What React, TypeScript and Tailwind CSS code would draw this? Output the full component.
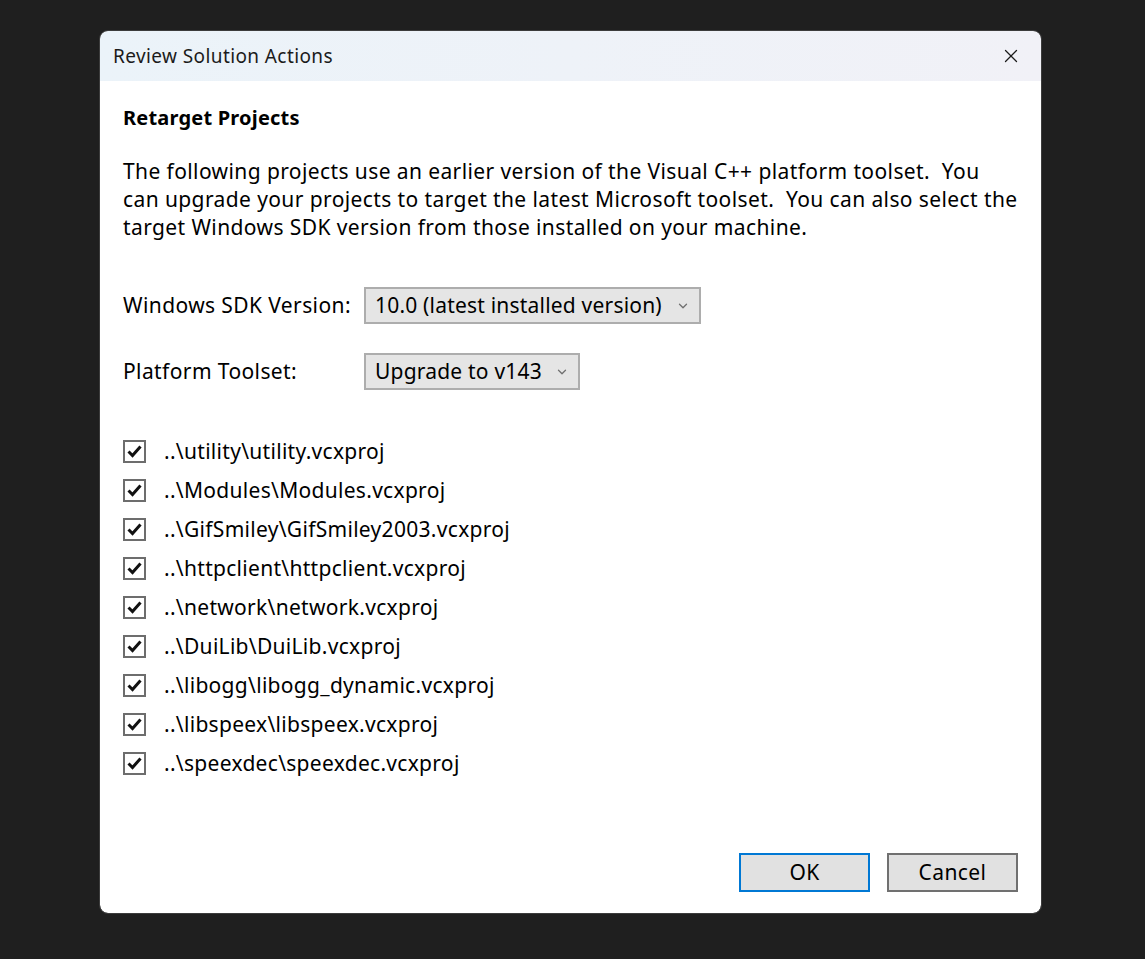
import { X, ChevronDown } from 'lucide-react';

const projects = [
  '..\\utility\\utility.vcxproj',
  '..\\Modules\\Modules.vcxproj',
  '..\\GifSmiley\\GifSmiley2003.vcxproj',
  '..\\httpclient\\httpclient.vcxproj',
  '..\\network\\network.vcxproj',
  '..\\DuiLib\\DuiLib.vcxproj',
  '..\\libogg\\libogg_dynamic.vcxproj',
  '..\\libspeex\\libspeex.vcxproj',
  '..\\speexdec\\speexdec.vcxproj',
];

function CheckBox() {
  return (
    <span className="flex h-[23px] w-[23px] shrink-0 items-center justify-center border-2 border-[#6d6d6d] bg-white">
      <svg width="15" height="13" viewBox="0 0 15 13">
        <path d="M1.5 6.5 L5.5 10.5 L13.5 1.5" fill="none" stroke="#111" strokeWidth="3" />
      </svg>
    </span>
  );
}

function Dropdown({ label, width }: { label: string; width: string }) {
  return (
    <div className={`flex h-[37px] items-center justify-between border-2 border-[#adadad] bg-[#e5e5e5] pl-[9px] pr-[9px] ${width}`}>
      <span className="tracking-[0.2px]">{label}</span>
      <ChevronDown className="h-[14px] w-[14px] text-[#707070]" strokeWidth={2.2} />
    </div>
  );
}

export default function App() {
  return (
    <div
      className="min-h-screen bg-[#1f1f1f] pt-[31px] pl-[100px] text-[21px] tracking-[0.4px] text-black"
      style={{ fontFamily: '"Noto Sans", "Open Sans", sans-serif' }}
    >
      <div className="flex h-[882px] w-[941px] flex-col overflow-hidden rounded-[8px] bg-white outline outline-1 outline-[#3c3c3c]">
        <div className="flex h-[50px] items-center justify-between bg-gradient-to-r from-[#ebf3f9] to-[#f1f1f7] pl-[13px] pr-[19px]">
          <span className="text-[19px] tracking-[0.4px] text-[#1b1b1b]">Review Solution Actions</span>
          <X className="h-[22px] w-[22px] text-[#1b1b1b]" strokeWidth={1.4} />
        </div>

        <div className="flex flex-1 flex-col px-[23px] pt-[20px] pb-[21px]">
          <h1 className="text-[20px] leading-[34px] font-bold tracking-[0.2px]">Retarget Projects</h1>

          <p className="mt-[22px] leading-[28px] whitespace-nowrap">
            The following projects use an earlier version of the Visual C++ platform toolset.&nbsp; You
            <br />
            can upgrade your projects to target the latest Microsoft toolset.&nbsp; You can also select the
            <br />
            target Windows SDK version from those installed on your machine.
          </p>

          <div className="mt-[46px] flex items-center">
            <span className="w-[241px]">Windows SDK Version:</span>
            <Dropdown label="10.0 (latest installed version)" width="w-[337px]" />
          </div>
          <div className="mt-[29px] flex items-center">
            <span className="w-[241px]">Platform Toolset:</span>
            <Dropdown label="Upgrade to v143" width="w-[216px]" />
          </div>

          <div className="mt-[50px] flex flex-col gap-[16px]">
            {projects.map((p) => (
              <div key={p} className="flex h-[23px] items-center">
                <CheckBox />
                <span className="ml-[18px] tracking-[0.3px]">{p}</span>
              </div>
            ))}
          </div>

          <div className="mt-auto flex justify-end gap-[17px]">
            <button className="h-[39px] w-[131px] border-2 border-[#0078d4] bg-[#e1e1e1]">OK</button>
            <button className="h-[39px] w-[131px] border-2 border-[#707070] bg-[#e1e1e1]">Cancel</button>
          </div>
        </div>
      </div>
    </div>
  );
}
